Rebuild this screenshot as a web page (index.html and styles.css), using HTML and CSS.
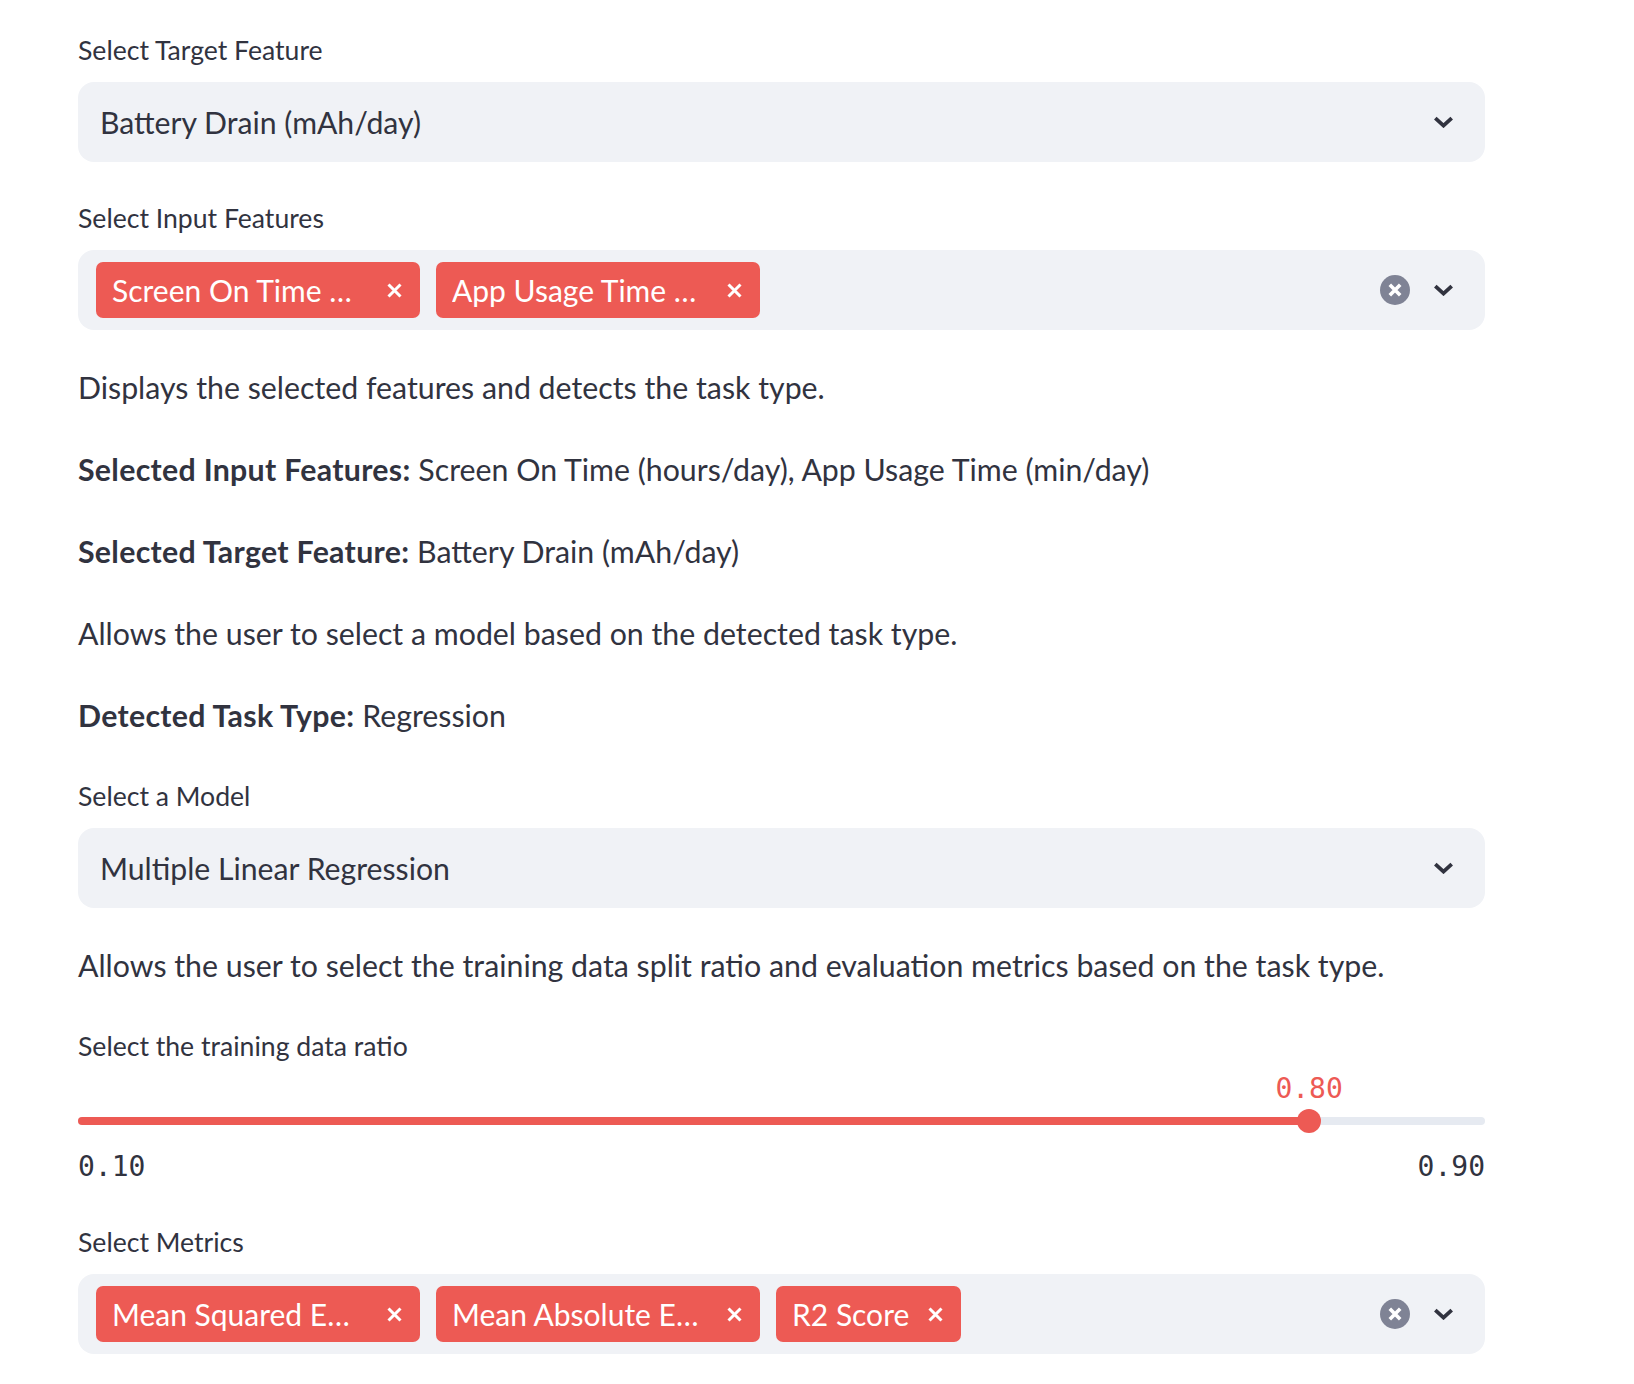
FILE: index.html
```html
<!DOCTYPE html>
<html>
<head>
<meta charset="utf-8">
<link rel="stylesheet" href="styles.css">
</head>
<body>
<div class="main">
  <div class="block">
    <label class="lbl">Select Target Feature</label>
    <div class="select">
      <span class="val">Battery Drain (mAh/day)</span>
      <span class="icons">
        <svg class="chev" width="21" height="12" viewBox="0 0 21 12"><path d="M2.3 2.2 L10.5 9.6 L18.7 2.2" fill="none" stroke="#31333f" stroke-width="3.8"/></svg>
      </span>
    </div>
  </div>

  <div class="block">
    <label class="lbl">Select Input Features</label>
    <div class="select multi">
      <div class="tags">
        <span class="tag"><span class="t trunc">Screen On Time …</span><svg class="x" width="17" height="17" viewBox="0 0 17 17"><path d="M2.5 2.5 L14.5 14.5 M14.5 2.5 L2.5 14.5" stroke="#fff" stroke-width="3"/></svg></span>
        <span class="tag"><span class="t trunc">App Usage Time …</span><svg class="x" width="17" height="17" viewBox="0 0 17 17"><path d="M2.5 2.5 L14.5 14.5 M14.5 2.5 L2.5 14.5" stroke="#fff" stroke-width="3"/></svg></span>
      </div>
      <span class="icons">
        <svg class="clear" width="30" height="30" viewBox="0 0 30 30"><circle cx="15" cy="15" r="15" fill="#7f8395"/><path d="M9.8 9.8 L20.2 20.2 M20.2 9.8 L9.8 20.2" stroke="#fff" stroke-width="3.6"/></svg>
        <svg class="chev" width="21" height="12" viewBox="0 0 21 12"><path d="M2.3 2.2 L10.5 9.6 L18.7 2.2" fill="none" stroke="#31333f" stroke-width="3.8"/></svg>
      </span>
    </div>
  </div>

  <p>Displays the selected features and detects the task type.</p>
  <p><b>Selected Input Features:</b> Screen On Time (hours/day), App Usage Time (min/day)</p>
  <p><b>Selected Target Feature:</b> Battery Drain (mAh/day)</p>
  <p>Allows the user to select a model based on the detected task type.</p>
  <p><b>Detected Task Type:</b> Regression</p>

  <div class="block">
    <label class="lbl">Select a Model</label>
    <div class="select">
      <span class="val">Multiple Linear Regression</span>
      <span class="icons">
        <svg class="chev" width="21" height="12" viewBox="0 0 21 12"><path d="M2.3 2.2 L10.5 9.6 L18.7 2.2" fill="none" stroke="#31333f" stroke-width="3.8"/></svg>
      </span>
    </div>
  </div>

  <p>Allows the user to select the training data split ratio and evaluation metrics based on the task type.</p>

  <div class="block">
    <label class="lbl tight">Select the training data ratio</label>
    <div class="slider">
      <div class="sval-row"><span class="sval" style="left:87.5%">0.80</span></div>
      <div class="track">
        <div class="fill" style="width:87.5%"></div>
        <div class="thumb" style="left:87.5%"></div>
      </div>
      <div class="ticks"><span>0.10</span><span>0.90</span></div>
    </div>
  </div>

  <div class="block">
    <label class="lbl">Select Metrics</label>
    <div class="select multi">
      <div class="tags">
        <span class="tag"><span class="t trunc">Mean Squared E…</span><svg class="x" width="17" height="17" viewBox="0 0 17 17"><path d="M2.5 2.5 L14.5 14.5 M14.5 2.5 L2.5 14.5" stroke="#fff" stroke-width="3"/></svg></span>
        <span class="tag"><span class="t trunc">Mean Absolute E…</span><svg class="x" width="17" height="17" viewBox="0 0 17 17"><path d="M2.5 2.5 L14.5 14.5 M14.5 2.5 L2.5 14.5" stroke="#fff" stroke-width="3"/></svg></span>
        <span class="tag"><span class="t">R2 Score</span><svg class="x" width="17" height="17" viewBox="0 0 17 17"><path d="M2.5 2.5 L14.5 14.5 M14.5 2.5 L2.5 14.5" stroke="#fff" stroke-width="3"/></svg></span>
      </div>
      <span class="icons">
        <svg class="clear" width="30" height="30" viewBox="0 0 30 30"><circle cx="15" cy="15" r="15" fill="#7f8395"/><path d="M9.8 9.8 L20.2 20.2 M20.2 9.8 L9.8 20.2" stroke="#fff" stroke-width="3.6"/></svg>
        <svg class="chev" width="21" height="12" viewBox="0 0 21 12"><path d="M2.3 2.2 L10.5 9.6 L18.7 2.2" fill="none" stroke="#31333f" stroke-width="3.8"/></svg>
      </span>
    </div>
  </div>
</div>
</body>
</html>
```
FILE: styles.css
```css
html, body {
  margin: 0;
  padding: 0;
  background: #ffffff;
}
body {
  font-family: "Lato", "Noto Sans", sans-serif;
  color: #31333f;
}
.main {
  width: 1407px;
  padding: 26px 0 0 78px;
  display: flex;
  flex-direction: column;
  gap: 32px;
}
.block {
  display: flex;
  flex-direction: column;
}
.lbl {
  display: block;
  font-size: 26.6px;
  line-height: 48px;
  margin-bottom: 8px;
}
.lbl.tight {
  margin-bottom: 0;
}
.select {
  height: 80px;
  box-sizing: border-box;
  background: #f0f2f6;
  border-radius: 16px;
  display: flex;
  align-items: center;
  padding: 0 31px 0 22px;
}
.select.multi {
  padding-left: 18px;
}
.val {
  flex: 1;
  font-size: 30.2px;
}
.tags {
  flex: 1;
  display: flex;
  gap: 16px;
}
.tag {
  height: 56px;
  box-sizing: border-box;
  background: #ed5a54;
  border-radius: 7px;
  display: flex;
  align-items: center;
  padding: 0 17px 0 16px;
  color: #ffffff;
  font-size: 30px;
}
.tag .t {
  white-space: nowrap;
}
.tag .t.trunc {
  width: 256px;
  overflow: hidden;
}
.tag .x {
  margin-left: 18px;
  flex: none;
}
.icons {
  display: flex;
  align-items: center;
  gap: 23px;
}
.clear, .chev {
  display: block;
}
p {
  margin: 0;
  font-size: 30.3px;
  line-height: 50px;
}
b {
  font-weight: 700;
  letter-spacing: 0.3px;
}
.slider {
  display: flex;
  flex-direction: column;
  padding-top: 3px;
  padding-bottom: 3px;
}
.sval-row {
  position: relative;
  height: 32px;
}
.sval {
  position: absolute;
  top: 0;
  transform: translateX(-50%);
  font-family: "DejaVu Sans Mono", monospace;
  font-size: 28px;
  line-height: 32px;
  color: #ed5a54;
}
.track {
  position: relative;
  height: 8px;
  margin: 12px 0;
  border-radius: 4px;
  background: #e6eaf1;
}
.fill {
  height: 100%;
  border-radius: 4px;
  background: #ed5a54;
}
.thumb {
  position: absolute;
  top: 50%;
  width: 24px;
  height: 24px;
  border-radius: 50%;
  background: #ed5a54;
  transform: translate(-50%, -50%);
}
.ticks {
  display: flex;
  justify-content: space-between;
  margin-top: 14px;
  font-family: "DejaVu Sans Mono", monospace;
  font-size: 28px;
  line-height: 32px;
}
```
